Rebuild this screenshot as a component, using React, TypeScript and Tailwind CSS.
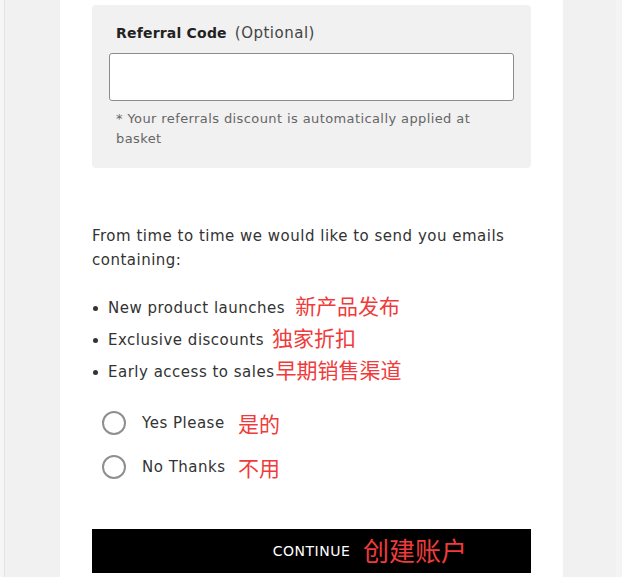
const RED = 'text-[#ef3b3b]';

function Note({ children, size = 'text-[21px]' }: { children: string; size?: string }) {
  return (
    <span className={`${RED} ${size} leading-none tracking-normal font-['Noto_Sans_CJK_SC',sans-serif]`}>{children}</span>
  );
}

const BULLETS = [
  { text: 'New product launches', note: '新产品发布', gap: 'ml-[10px]' },
  { text: 'Exclusive discounts', note: '独家折扣', gap: 'ml-[8px]' },
  { text: 'Early access to sales', note: '早期销售渠道', gap: 'ml-[1px]' },
];

const OPTIONS = [
  { label: 'Yes Please', note: '是的' },
  { label: 'No Thanks', note: '不用' },
];

export default function App() {
  return (
    <div className="flex h-[577px] w-[622px] overflow-hidden bg-[#f1f1f1] font-['DejaVu_Sans',sans-serif] text-[#333]">
      <div className="w-[5px] border-r border-[#e4e4e4] bg-[#f6f6f6]" />
      <div className="w-[55px]" />
      <main className="w-[503px] bg-white px-[32px] pt-[5px]">
        {/* Referral box */}
        <section className="rounded-[4px] bg-[#f1f1f1] px-[17px] pb-[19px] pt-[19px]">
          <label className="flex items-baseline gap-[8px] px-[7px] leading-[18px]">
            <span className="text-[14px] font-bold tracking-[0.2px] text-[#222]">Referral Code</span>
            <span className="text-[15px] tracking-[0.5px] text-[#444]">(Optional)</span>
          </label>
          <input
            type="text"
            className="mt-[11px] block h-[48px] w-full rounded-[3px] border border-[#8c8c8c] bg-white px-3 outline-none"
          />
          <p className="mt-[8px] px-[7px] text-[13px] leading-[20px] tracking-[0.4px] text-[#666]">
            * Your referrals discount is automatically applied at basket
          </p>
        </section>

        {/* Email preferences */}
        <p className="mt-[56px] text-[15px] leading-[24px] tracking-[0.5px] text-[#333]">
          From time to time we would like to send you emails containing:
        </p>
        <ul className="mt-[24px] flex flex-col gap-[8px]">
          {BULLETS.map((b) => (
            <li key={b.text} className="flex h-[24px] items-center whitespace-nowrap text-[15px] tracking-[0.5px]">
              <span className="mr-[10px] ml-[1px] h-[5px] w-[5px] rounded-full bg-[#333]" />
              <span>{b.text}</span>
              <span className={b.gap}>
                <Note>{b.note}</Note>
              </span>
            </li>
          ))}
        </ul>

        <div className="mt-[27px] flex flex-col gap-[20px] pl-[10px]">
          {OPTIONS.map((o) => (
            <label key={o.label} className="flex h-[24px] items-center whitespace-nowrap text-[15px] tracking-[0.5px]">
              <span className="h-[24px] w-[24px] shrink-0 rounded-full border-2 border-[#8f8f8f] bg-white" />
              <span className="ml-[16px] w-[96px] shrink-0 text-[#333]">{o.label}</span>
              <Note>{o.note}</Note>
            </label>
          ))}
        </div>

        <button className="relative mt-[50px] flex h-[44px] w-full items-center justify-center bg-black">
          <span className="text-[14px] tracking-[0.5px] text-white">CONTINUE</span>
          <span className="absolute left-[271px] top-[8px]">
            <Note size="text-[26px]">创建账户</Note>
          </span>
        </button>
      </main>
      <div className="w-[53px]" />
      <div className="flex-1 bg-[#f4f4f4]" />
    </div>
  );
}
